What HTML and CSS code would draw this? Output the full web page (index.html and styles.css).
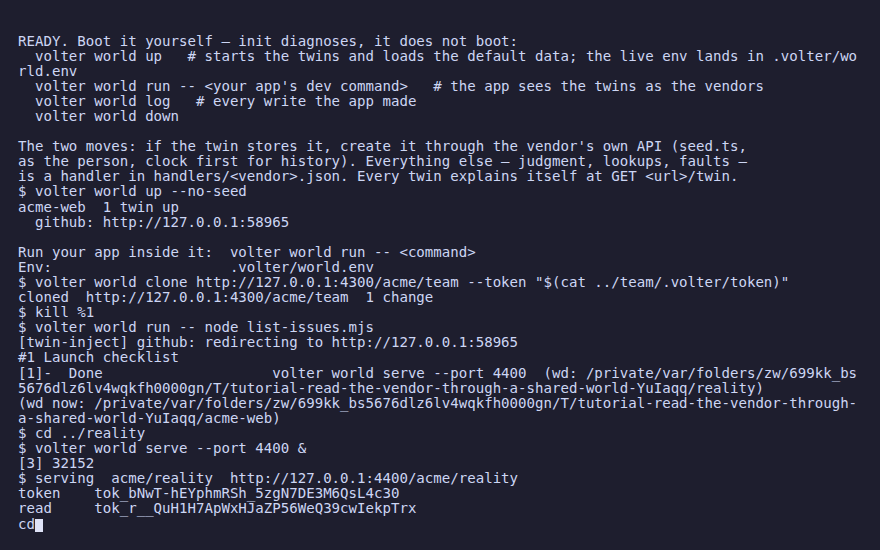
FILE: index.html
```html
<!DOCTYPE html>
<html>
<head>
<meta charset="utf-8">
<link rel="stylesheet" href="styles.css">
</head>
<body>
<main class="term">
<div class="ln">READY. Boot it yourself — init diagnoses, it does not boot:</div>
<div class="ln">  volter world up   # starts the twins and loads the default data; the live env lands in .volter/wo</div>
<div class="ln">rld.env</div>
<div class="ln">  volter world run -- &lt;your app's dev command&gt;   # the app sees the twins as the vendors</div>
<div class="ln">  volter world log   # every write the app made</div>
<div class="ln">  volter world down</div>
<div class="ln"> </div>
<div class="ln">The two moves: if the twin stores it, create it through the vendor's own API (seed.ts,</div>
<div class="ln">as the person, clock first for history). Everything else — judgment, lookups, faults —</div>
<div class="ln">is a handler in handlers/&lt;vendor&gt;.json. Every twin explains itself at GET &lt;url&gt;/twin.</div>
<div class="ln">$ volter world up --no-seed</div>
<div class="ln">acme-web  1 twin up</div>
<div class="ln">  github: http://127.0.0.1:58965</div>
<div class="ln"> </div>
<div class="ln">Run your app inside it:  volter world run -- &lt;command&gt;</div>
<div class="ln">Env:                     .volter/world.env</div>
<div class="ln">$ volter world clone http://127.0.0.1:4300/acme/team --token "$(cat ../team/.volter/token)"</div>
<div class="ln">cloned  http://127.0.0.1:4300/acme/team  1 change</div>
<div class="ln">$ kill %1</div>
<div class="ln">$ volter world run -- node list-issues.mjs</div>
<div class="ln">[twin-inject] github: redirecting to http://127.0.0.1:58965</div>
<div class="ln">#1 Launch checklist</div>
<div class="ln">[1]-  Done                    volter world serve --port 4400  (wd: /private/var/folders/zw/699kk_bs</div>
<div class="ln">5676dlz6lv4wqkfh0000gn/T/tutorial-read-the-vendor-through-a-shared-world-YuIaqq/reality)</div>
<div class="ln">(wd now: /private/var/folders/zw/699kk_bs5676dlz6lv4wqkfh0000gn/T/tutorial-read-the-vendor-through-</div>
<div class="ln">a-shared-world-YuIaqq/acme-web)</div>
<div class="ln">$ cd ../reality</div>
<div class="ln">$ volter world serve --port 4400 &amp;</div>
<div class="ln">[3] 32152</div>
<div class="ln">$ serving  acme/reality  http://127.0.0.1:4400/acme/reality</div>
<div class="ln">token    tok_bNwT-hEYphmRSh_5zgN7DE3M6QsL4c30</div>
<div class="ln">read     tok_r__QuH1H7ApWxHJaZP56WeQ39cwIekpTrx</div>
<div class="ln">cd<span class="cursor"> </span></div>
</main>
</body>
</html>
```
FILE: styles.css
```css
html, body {
  margin: 0;
  padding: 0;
  background: #1e1e2e;
}
body {
  width: 880px;
  height: 550px;
  overflow: hidden;
}
.term {
  padding: 33.5px 0 0 18px;
  font-family: "DejaVu Sans Mono", "Liberation Mono", monospace;
  font-size: 14.08px;
  line-height: 15.1px;
  color: #cdd6f4;
}
.ln {
  white-space: pre;
  height: 15.1px;
}
.cursor {
  display: inline-block;
  width: 8.5px;
  height: 12.5px;
  vertical-align: -2.5px;
  background: #dfe3f7;
}
```
